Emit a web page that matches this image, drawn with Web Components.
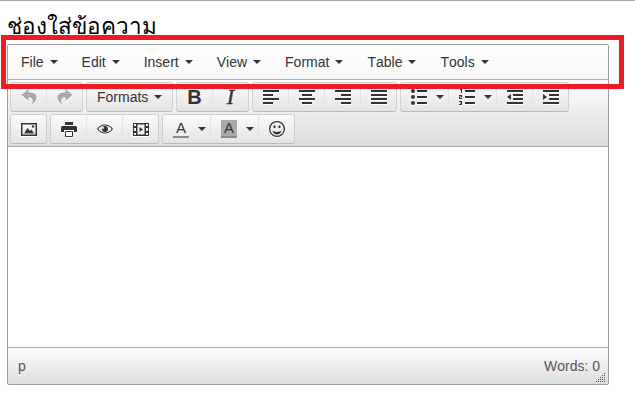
<!DOCTYPE html>
<html>
<head>
<meta charset="utf-8">
<title>editor</title>
<style>
  html, body { margin: 0; background: #fff; }
  body { border-top: 1px solid #aaa; font-family: "Liberation Sans", Arial, sans-serif; }
</style>
</head>
<body>
<editor-page>
  <span slot="title">ช่องใส่ข้อความ</span>
  <tiny-editor>
    <menu-item slot="menu">File</menu-item>
    <menu-item slot="menu">Edit</menu-item>
    <menu-item slot="menu">Insert</menu-item>
    <menu-item slot="menu">View</menu-item>
    <menu-item slot="menu">Format</menu-item>
    <menu-item slot="menu">Table</menu-item>
    <menu-item slot="menu">Tools</menu-item>

    <tool-row slot="toolbar">
      <tool-group>
        <tool-btn icon="undo" disabled></tool-btn>
        <tool-btn icon="redo" disabled></tool-btn>
      </tool-group>
      <tool-group>
        <tool-btn kind="formats" caret><span>Formats</span></tool-btn>
      </tool-group>
      <tool-group>
        <tool-btn><b class="b">B</b></tool-btn>
        <tool-btn><i class="i">I</i></tool-btn>
      </tool-group>
      <tool-group>
        <tool-btn icon="alignleft"></tool-btn>
        <tool-btn icon="aligncenter"></tool-btn>
        <tool-btn icon="alignright"></tool-btn>
        <tool-btn icon="alignjustify"></tool-btn>
      </tool-group>
      <tool-group>
        <tool-btn icon="bullist" caret kind="split"></tool-btn>
        <tool-btn icon="numlist" caret kind="split"></tool-btn>
        <tool-btn icon="outdent"></tool-btn>
        <tool-btn icon="indent"></tool-btn>
      </tool-group>
    </tool-row>
    <tool-row slot="toolbar">
      <tool-group>
        <tool-btn icon="image"></tool-btn>
      </tool-group>
      <tool-group>
        <tool-btn icon="print"></tool-btn>
        <tool-btn icon="preview"></tool-btn>
        <tool-btn icon="media"></tool-btn>
      </tool-group>
      <tool-group>
        <tool-btn kind="split" caret><color-a></color-a></tool-btn>
        <tool-btn kind="split" caret><color-a filled></color-a></tool-btn>
        <tool-btn icon="smile"></tool-btn>
      </tool-group>
    </tool-row>

    <span slot="path">p</span>
    <span slot="words">Words: 0</span>
  </tiny-editor>
</editor-page>

<script>
// icon shapes, all on a 16 box
const ICONS = {
  undo: '<path d="M7.500 0 .5 6l7 6V8.200c3 0 4.300 1.300 4.300 3.600 0 1.300-.4 2.600-1 3.700 3-1.800 4.700-4.300 4.700-7.200 0-3.600-3.300-4.900-8-4.900z"/>',
  redo: '<path d="M8.500 0l7 6-7 6V8.200c-3 0-4.300 1.300-4.300 3.600 0 1.300.4 2.600 1 3.700-3-1.800-4.700-4.300-4.700-7.200 0-3.600 3.300-4.900 8-4.900z"/>',
  alignleft: '<path d="M0 1h16v2H0zM0 5h10v2H0zM0 9h16v2H0zM0 13h10v2H0z"/>',
  aligncenter: '<path d="M0 1h16v2H0zM3 5h10v2H3zM0 9h16v2H0zM3 13h10v2H3z"/>',
  alignright: '<path d="M0 1h16v2H0zM6 5h10v2H6zM0 9h16v2H0zM6 13h10v2H6z"/>',
  alignjustify: '<path d="M0 1h16v2H0zM0 5h16v2H0zM0 9h16v2H0zM0 13h16v2H0z"/>',
  bullist: '<circle cx="2" cy="2" r="2"/><circle cx="2" cy="8" r="2"/><circle cx="2" cy="14" r="2"/><path d="M6 1h10v2H6zM6 7h10v2H6zM6 13h10v2H6z"/>',
  numlist: '<path d="M1 0h2v4H2V1H1zM0 6h3v2.200H1V9h2v1H0V7.600h2V7H0zM0 12h3v4H0v-1h2v-.5H1v-1h1V13H0z"/><path d="M6 1h10v2H6zM6 7h10v2H6zM6 13h10v2H6z"/>',
  outdent: '<path d="M0 1h16v2H0zM6 5h10v2H6zM6 9h10v2H6zM0 13h16v2H0zM4 5v6L0 8z"/>',
  indent: '<path d="M0 1h16v2H0zM6 5h10v2H6zM6 9h10v2H6zM0 13h16v2H0zM0 5v6l4-3z"/>',
  image: '<path fill-rule="evenodd" d="M0 2h16v13H0zM1.500 3.500v10h13v-10z"/><path d="M3 12.500 6.500 7l2.500 3 1.500-1.500 2.500 4z"/><circle cx="12" cy="5.500" r="1.200"/>',
  print: '<path d="M4 1h8v3H4z"/><path fill-rule="evenodd" d="M1.500 5h13c.8 0 1.500.7 1.500 1.500V11h-3V9H3v2H0V6.500C0 5.700.7 5 1.500 5z"/><path d="M4.500 10.500h7v5h-7z" fill="#fff" stroke="#333"/>',
  preview: '<path fill-rule="evenodd" d="M8 3.500c3.400 0 6.300 1.800 8 4.500-1.700 2.700-4.600 4.500-8 4.500S1.700 10.700 0 8c1.700-2.700 4.600-4.500 8-4.500zM1.300 8c1.500 2.200 3.900 3.600 6.700 3.600s5.200-1.400 6.700-3.600C13.200 5.800 10.800 4.400 8 4.400S2.800 5.800 1.300 8z"/><path fill-rule="evenodd" d="M8 5a3 3 0 1 1 0 6 3 3 0 0 1 0-6zM6.200 6a.9.9 0 1 0 0 1.800.9.9 0 0 0 0-1.800z"/>',
  media: '<path fill-rule="evenodd" d="M0 2h16v13H0zM1 3v2h2V3zM1 7v3h2V7zM1 12v2h2v-2zM13 3v2h2V3zM13 7v3h2V7zM13 12v2h2v-2zM4.500 3.500v10h7v-10z"/><path d="M6.500 6l3.500 2.500L6.500 11z"/>',
  smile: '<path fill-rule="evenodd" d="M8 0a8 8 0 1 1 0 16A8 8 0 0 1 8 0zm0 1.300a6.700 6.700 0 1 0 0 13.400A6.700 6.700 0 0 0 8 1.300z"/><ellipse cx="5.500" cy="5.800" rx="1.100" ry="1.500"/><ellipse cx="10.500" cy="5.800" rx="1.100" ry="1.500"/><path d="M3.500 9.500c1.300 1 2.800 1.400 4.500 1.400s3.200-.4 4.500-1.400c-.4 2.400-2.200 4-4.500 4s-4.100-1.600-4.500-4z"/>'
};

class EditorPage extends HTMLElement {
  constructor() {
    super();
    this.attachShadow({ mode: 'open' }).innerHTML = `
      <style>
        :host { display: block; position: relative; padding: 11px 26px 0 7px; height: 390px; }
        h1 { margin: 0 0 5px; font: normal 22.5px/27px "Noto Sans", "Liberation Sans", sans-serif; color: #000; }
        .mark { position: absolute; left: 1px; top: 34px; width: 623px; height: 54px; box-sizing: border-box;
                border: 5px solid #ed1c24; pointer-events: none; }
      </style>
      <h1><slot name="title"></slot></h1>
      <slot></slot>
      <div class="mark"></div>`;
  }
}

class TinyEditor extends HTMLElement {
  constructor() {
    super();
    this.attachShadow({ mode: 'open' }).innerHTML = `
      <style>
        :host { display: flex; flex-direction: column; box-sizing: border-box; width: 602px; height: 341px;
                border: 1px solid #9e9e9e; border-radius: 2px; font: 14px "Liberation Sans", Arial, sans-serif; font-kerning: none; color: #333; }
        .menu { display: flex; align-items: center; gap: 24px; height: 34px; padding-left: 13px;
                background: linear-gradient(#fff, #f8f8f8); border-bottom: 1px solid #b1b1b1; }
        .tools { display: flex; flex-direction: column; gap: 2px; box-sizing: border-box; height: 67px; padding: 2px;
                 background: linear-gradient(#fdfdfd, #dddddd); border-bottom: 1px solid #a9a9a9; }
        .area { flex: 1; background: #fff; }
        .status { position: relative; display: flex; justify-content: space-between; align-items: center; height: 36px; padding: 0 8px 0 10px;
                  background: linear-gradient(#fdfdfd, #dddddd); border-top: 1px solid #a9a9a9; color: #555; }
        svg { position: absolute; right: 2px; bottom: 1px; }
      </style>
      <div class="menu"><slot name="menu"></slot></div>
      <div class="tools"><slot name="toolbar"></slot></div>
      <div class="area"></div>
      <div class="status">
        <slot name="path"></slot><slot name="words"></slot>
        <svg width="10" height="10" viewBox="0 0 10 10" fill="#555">
          <path d="M8 0h1v1H8zM8 2h1v1H8zM6 2h1v1H6zM8 4h1v1H8zM6 4h1v1H6zM4 4h1v1H4zM8 6h1v1H8zM6 6h1v1H6zM4 6h1v1H4zM2 6h1v1H2zM8 8h1v1H8zM6 8h1v1H6zM4 8h1v1H4zM2 8h1v1H2zM0 8h1v1H0z"/>
        </svg>
      </div>`;
  }
}

class MenuItem extends HTMLElement {
  constructor() {
    super();
    this.attachShadow({ mode: 'open' }).innerHTML = `
      <style>
        :host { display: inline-flex; align-items: center; color: #333; }
        i { margin-left: 6px; width: 0; height: 0; border: 4px solid transparent; border-top-color: #333; border-bottom: 0; }
      </style>
      <slot></slot><i></i>`;
  }
}

class ToolRow extends HTMLElement {
  constructor() {
    super();
    this.attachShadow({ mode: 'open' }).innerHTML = `
      <style>:host { display: flex; gap: 3px; height: 30px; }</style>
      <slot></slot>`;
  }
}

class ToolGroup extends HTMLElement {
  constructor() {
    super();
    this.attachShadow({ mode: 'open' }).innerHTML = `
      <style>
        :host { display: flex; border: 1px solid #cfcfcf; border-bottom-color: #b9b9b9; border-radius: 3px;
                background: linear-gradient(#fbfbfb, #e4e4e4); }
      </style>
      <slot></slot>`;
  }
}

class ToolBtn extends HTMLElement {
  constructor() {
    super();
    const icon = ICONS[this.getAttribute('icon')];
    const svg = icon ? `<svg class="icon" width="16" height="16" viewBox="0 0 16 16" fill="currentColor">${icon}</svg>` : '';
    const caret = this.hasAttribute('caret') ? '<em></em>' : '';
    this.attachShadow({ mode: 'open' }).innerHTML = `
      <style>
        :host { display: flex; align-items: center; justify-content: center; box-sizing: border-box; width: 36px;
                border-left: 1px solid #e3e3e3; color: #333; }
        :host(:first-child) { width: 35px; border-left: 0; }
        :host([kind="split"]) { width: 48px; justify-content: flex-start; padding-left: 10px; }
        :host([kind="split"]:first-child) { width: 47px; }
        :host([kind="formats"]) { width: 85px; justify-content: flex-start; padding-left: 10px; }
        :host([disabled]) { color: #a8a8a8; }
        .icon { display: block; filter: drop-shadow(0 1px 0 #fff); }
        em { margin-left: 9px; width: 0; height: 0; border: 4px solid transparent; border-top-color: #333; border-bottom: 0; }
        :host([kind="formats"]) em { margin-left: 6px; }
        ::slotted(.b) { font: bold 20px "Liberation Sans", sans-serif; }
        ::slotted(.i) { font: italic 22px "Liberation Serif", serif; -webkit-text-stroke: .4px #333; }
      </style>
      ${svg}<slot></slot>${caret}`;
  }
}

class ColorA extends HTMLElement {
  constructor() {
    super();
    this.attachShadow({ mode: 'open' }).innerHTML = `
      <style>
        :host { display: block; width: 16px; height: 18px; box-sizing: border-box; text-align: center;
                font: 15px/16px "Liberation Sans", sans-serif; color: #333; border-bottom: 2px solid #8c8c8c; }
        :host([filled]) { background: #aaa; }
      </style>
      A`;
  }
}

customElements.define('editor-page', EditorPage);
customElements.define('tiny-editor', TinyEditor);
customElements.define('menu-item', MenuItem);
customElements.define('tool-row', ToolRow);
customElements.define('tool-group', ToolGroup);
customElements.define('tool-btn', ToolBtn);
customElements.define('color-a', ColorA);
</script>
</body>
</html>
